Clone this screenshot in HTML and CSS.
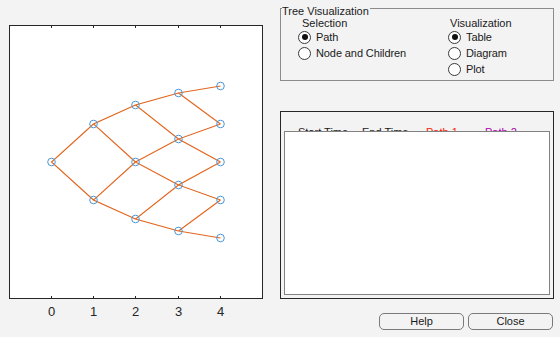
FILE: index.html
```html
<!DOCTYPE html>
<html>
<head>
<meta charset="utf-8">
<link rel="stylesheet" href="styles.css">
</head>
<body>
<div class="app">
  <svg class="plot" width="270" height="337" viewBox="0 0 270 337">
    <rect x="9.5" y="25.5" width="253" height="273" fill="#fff" stroke="#262626"/>
    <g stroke="#262626" stroke-width="1">
      <path d="M51.5 25.5V28M93.5 25.5V28M135.5 25.5V28M178.5 25.5V28M220.5 25.5V28"/>
      <path d="M51.5 298.5V296M93.5 298.5V296M135.5 298.5V296M178.5 298.5V296M220.5 298.5V296"/>
    </g>
    <g class="ticklabels" text-anchor="middle">
      <text x="51.5" y="316">0</text>
      <text x="93.5" y="316">1</text>
      <text x="135.5" y="316">2</text>
      <text x="178.5" y="316">3</text>
      <text x="220.5" y="316">4</text>
    </g>
    <path fill="none" stroke="#e2651c" stroke-width="1.1"
      d="M93.5 124L51.5 162L93.5 200
         M135.5 105L93.5 124L135.5 162
         M135.5 162L93.5 200L135.5 219
         M178.5 93L135.5 105L178.5 139
         M178.5 139L135.5 162L178.5 185
         M178.5 185L135.5 219L178.5 231
         M220.5 86L178.5 93L220.5 124
         M220.5 124L178.5 139L220.5 162
         M220.5 162L178.5 185L220.5 200
         M220.5 200L178.5 231L220.5 238"/>
    <g fill="none" stroke="#4a97d8" stroke-width="1">
      <circle cx="51.5" cy="162" r="3.8"/>
      <circle cx="93.5" cy="124" r="3.8"/>
      <circle cx="93.5" cy="200" r="3.8"/>
      <circle cx="135.5" cy="105" r="3.8"/>
      <circle cx="135.5" cy="162" r="3.8"/>
      <circle cx="135.5" cy="219" r="3.8"/>
      <circle cx="178.5" cy="93" r="3.8"/>
      <circle cx="178.5" cy="139" r="3.8"/>
      <circle cx="178.5" cy="185" r="3.8"/>
      <circle cx="178.5" cy="231" r="3.8"/>
      <circle cx="220.5" cy="86" r="3.8"/>
      <circle cx="220.5" cy="124" r="3.8"/>
      <circle cx="220.5" cy="162" r="3.8"/>
      <circle cx="220.5" cy="200" r="3.8"/>
      <circle cx="220.5" cy="238" r="3.8"/>
    </g>
  </svg>

  <div class="side">
    <div class="group">
      <div class="group-title">Tree Visualization</div>
      <div class="group-cols">
        <div class="col col-sel">
          <div class="col-head">Selection</div>
          <div class="radio-row"><span class="radio on"></span>Path</div>
          <div class="radio-row"><span class="radio"></span>Node and Children</div>
        </div>
        <div class="col col-vis">
          <div class="col-head">Visualization</div>
          <div class="radio-row"><span class="radio on"></span>Table</div>
          <div class="radio-row"><span class="radio"></span>Diagram</div>
          <div class="radio-row"><span class="radio"></span>Plot</div>
        </div>
      </div>
    </div>

    <div class="table-panel">
      <div class="thead">
        <span class="th th-start">Start Time</span><span class="th th-end">End Time</span><span class="th th-p1">Path 1</span><span class="th th-p2">Path 2</span>
      </div>
      <div class="listbox"></div>
    </div>

    <div class="buttons">
      <button class="btn">Help</button>
      <button class="btn">Close</button>
    </div>
  </div>
</div>
</body>
</html>
```

FILE: styles.css
```css
html, body {
  margin: 0;
  padding: 0;
}
body {
  background: #f3f3f3;
  font-family: "Liberation Sans", Arial, sans-serif;
  font-size: 11px;
  color: #1a1a1a;
  overflow: hidden;
}
.app {
  display: flex;
  width: 560px;
  height: 337px;
  overflow: hidden;
}
.plot {
  display: block;
  flex: none;
}
.ticklabels {
  font-family: "Liberation Sans", Arial, sans-serif;
  font-size: 13px;
  fill: #262626;
}
.side {
  width: 274px;
  margin-left: 10px;
  padding-top: 8px;
  display: flex;
  flex-direction: column;
}
.group {
  border: 1px solid #8c8c8c;
  height: 71px;
}
.group-title {
  width: fit-content;
  margin: -4px 0 0 1px;
  padding: 0 1px 0 0;
  background: #f3f3f3;
  line-height: 13px;
}
.group-cols {
  display: flex;
  padding-left: 18px;
}
.col-sel {
  width: 150px;
}
.col-head {
  line-height: 11px;
  height: 11px;
  white-space: nowrap;
}
.col-sel .col-head {
  padding-left: 3px;
}
.col-vis .col-head {
  padding-left: 1px;
}
.radio-row {
  display: flex;
  align-items: center;
  height: 16px;
  white-space: nowrap;
  letter-spacing: -0.1px;
}
.radio {
  flex: none;
  box-sizing: border-box;
  width: 13px;
  height: 13px;
  border: 1px solid #3a3a3a;
  border-radius: 50%;
  background: #fff;
  margin-left: -1px;
  margin-right: 5px;
  display: flex;
  align-items: center;
  justify-content: center;
}
.radio.on::after {
  content: "";
  width: 6px;
  height: 6px;
  border-radius: 50%;
  background: #111;
}
.table-panel {
  box-sizing: border-box;
  height: 188px;
  margin-top: 30px;
  border: 1px solid #262626;
  padding: 0 3px 3px;
  display: flex;
  flex-direction: column;
}
.thead {
  padding: 14px 0 0 14px;
  height: 13px;
  line-height: 13px;
  white-space: nowrap;
}
.th {
  display: inline-block;
}
.th-start { width: 64px; }
.th-end { width: 64px; }
.th-p1 { width: 59px; color: #ff1a00; }
.th-p2 { color: #b000b0; }
.listbox {
  position: relative;
  flex: 1;
  margin-top: -8px;
  border: 1px solid #828282;
  background: #fff;
}
.buttons {
  display: flex;
  justify-content: flex-end;
  gap: 4px;
  margin-top: 14px;
  padding-right: 1px;
}
.btn {
  box-sizing: border-box;
  width: 85px;
  height: 17px;
  padding: 0;
  border: 1px solid #7a7a7a;
  border-radius: 5px;
  background: #f3f3f3;
  font: inherit;
  color: #1a1a1a;
  line-height: 15px;
}
```
